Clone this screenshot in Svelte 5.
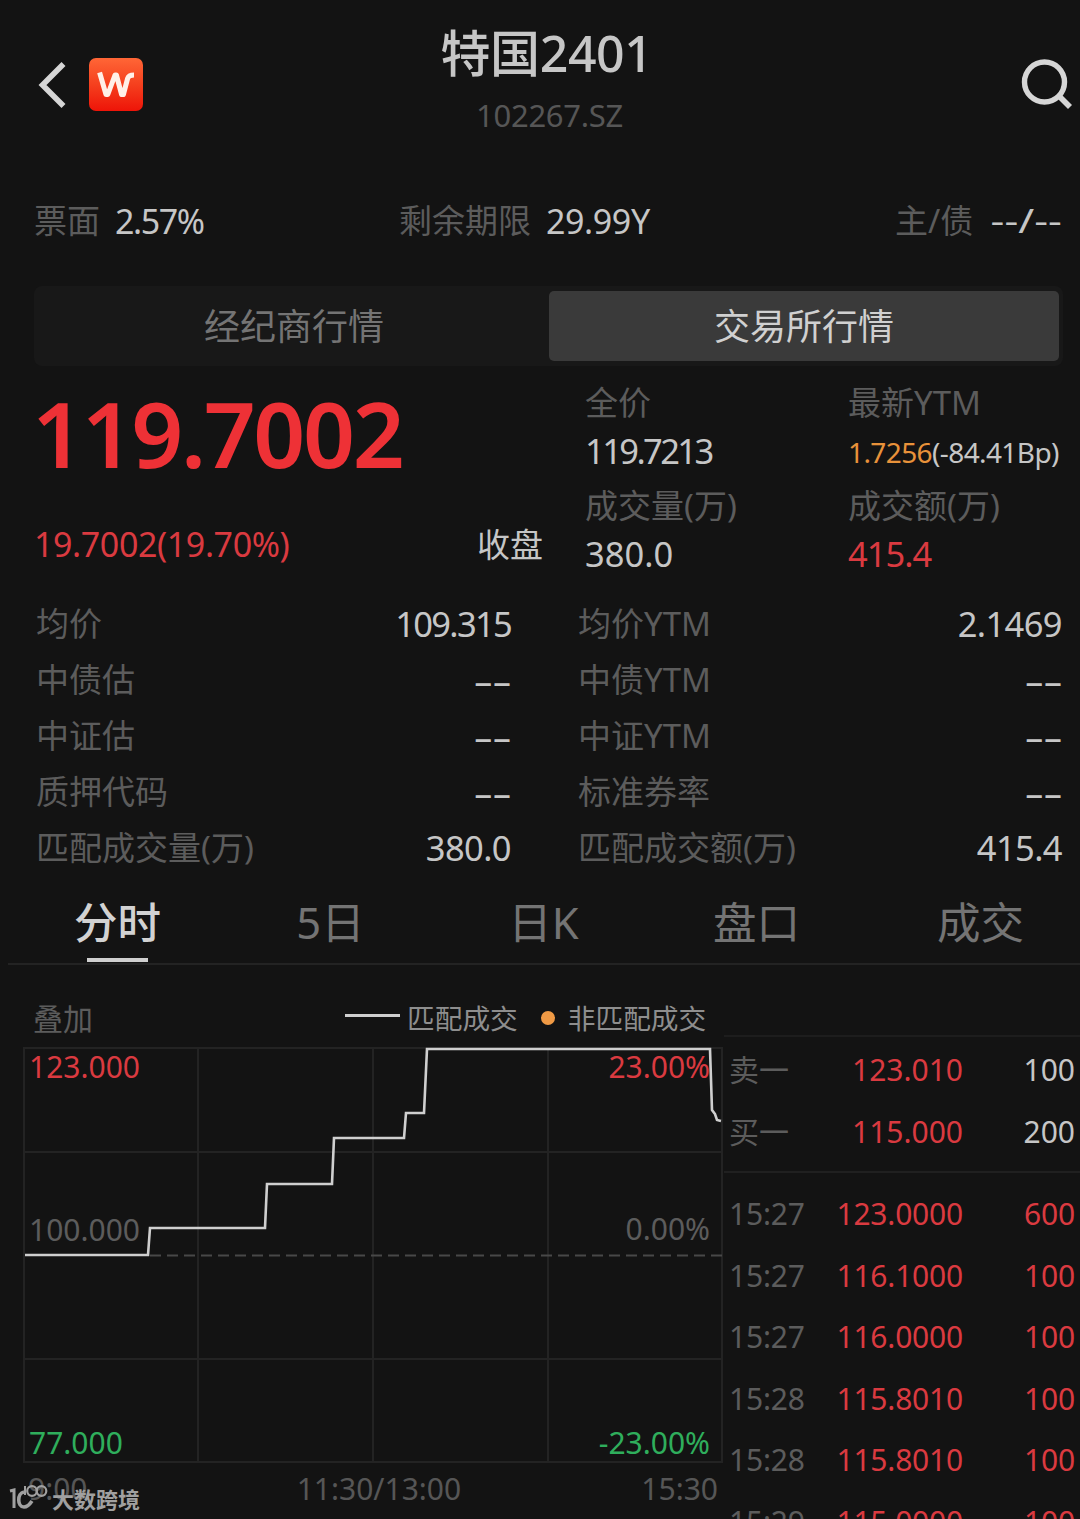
<script lang="ts">
  type Tone = 'up' | 'plain';

  interface Trade {
    time: string;
    price: string;
    volume: string;
  }

  const stats = [
    ['均价', '109.315', '均价YTM', '2.1469'],
    ['中债估', '--', '中债YTM', '--'],
    ['中证估', '--', '中证YTM', '--'],
    ['质押代码', '--', '标准券率', '--'],
    ['匹配成交量(万)', '380.0', '匹配成交额(万)', '415.4']
  ];

  const views = ['分时', '5日', '日K', '盘口', '成交'];
  let activeView = $state('分时');

  const markets = ['经纪商行情', '交易所行情'];
  let activeMarket = $state('交易所行情');

  const quotes: { label: string; price: string; volume: string; tone: Tone }[] = [
    { label: '卖一', price: '123.010', volume: '100', tone: 'plain' },
    { label: '买一', price: '115.000', volume: '200', tone: 'plain' }
  ];

  const trades: Trade[] = [
    { time: '15:27', price: '123.0000', volume: '600' },
    { time: '15:27', price: '116.1000', volume: '100' },
    { time: '15:27', price: '116.0000', volume: '100' },
    { time: '15:28', price: '115.8010', volume: '100' },
    { time: '15:28', price: '115.8010', volume: '100' },
    { time: '15:29', price: '115.0000', volume: '100' }
  ];

  // chart coordinates, origin at the top left of the plot
  const line = [
    [1, 208], [124, 208], [126, 181], [241, 181], [243, 137], [308, 137],
    [310, 91], [380, 91], [382, 66], [400, 66], [403, 2], [686, 2],
    [688, 63], [691, 67], [693, 73], [697, 74]
  ];
  const points = line.map((p) => p.join(',')).join(' ');
</script>

<div class="screen">
  <header>
    <div class="nav">
      <svg class="back" width="28" height="46" viewBox="0 0 28 46">
        <path d="M25.5 2 L4.5 23 L25.5 44" fill="none" stroke="#d6d6d6" stroke-width="5.6" />
      </svg>
      <svg class="logo" width="54" height="54" viewBox="0 0 54 54">
        <defs>
          <linearGradient id="logo-bg" x1="0" y1="0" x2="0" y2="1">
            <stop offset="0" stop-color="#ff6636" />
            <stop offset="0.5" stop-color="#f5401e" />
            <stop offset="1" stop-color="#ee1408" />
          </linearGradient>
        </defs>
        <rect width="54" height="53" rx="7" fill="url(#logo-bg)" />
        <path
          d="M10.6 14.5 L17 36.5 H18.8 L26 17 H27.4 L32.6 36.5 H34.4 L38.6 20.5 Q39.6 17 45 17"
          fill="none"
          stroke="#fff0e8"
          stroke-width="5"
          stroke-linejoin="round"
        />
      </svg>
    </div>
    <div class="title">
      <h1>特国2401</h1>
      <p>102267.SZ</p>
    </div>
    <svg class="search" width="54" height="54" viewBox="0 0 54 54">
      <circle cx="24.5" cy="24" r="20" fill="none" stroke="#d6d6d6" stroke-width="5.4" />
      <path d="M38.5 37.5 L50 49" stroke="#d6d6d6" stroke-width="5.6" />
    </svg>
  </header>

  <section class="info">
    <div><span class="label">票面</span><span class="coupon">2.57%</span></div>
    <div><span class="label">剩余期限</span><span class="term">29.99Y</span></div>
    <div class="rating"><span class="label">主/债</span><span class="grade">--/--</span></div>
  </section>

  <div class="markets">
    {#each markets as market}
      <button class:active={market === activeMarket} onclick={() => (activeMarket = market)}>
        {market}
      </button>
    {/each}
  </div>

  <section class="quote">
    <div class="last">
      <div class="price">119.7002</div>
      <div class="change">
        <span class="up diff">19.7002(19.70%)</span>
        <span class="status">收盘</span>
      </div>
    </div>
    <dl class="full">
      <dt>全价</dt>
      <dd class="tight">119.7213</dd>
      <dt>成交量(万)</dt>
      <dd>380.0</dd>
    </dl>
    <dl>
      <dt>最新YTM</dt>
      <dd class="ytm"><span>1.7256</span>(-84.41Bp)</dd>
      <dt>成交额(万)</dt>
      <dd class="up amount">415.4</dd>
    </dl>
  </section>

  <section class="stats">
    {#each stats as [leftLabel, leftValue, rightLabel, rightValue]}
      <div class="row">
        <span class="label">{leftLabel}</span>
        <span class="value" class:empty={leftValue === '--'} class:long={leftValue.length > 6}>{leftValue}</span>
        <span class="label second">{rightLabel}</span>
        <span class="value" class:empty={rightValue === '--'}>{rightValue}</span>
      </div>
    {/each}
  </section>

  <nav class="views">
    {#each views as view}
      <button class:active={view === activeView} onclick={() => (activeView = view)}>{view}</button>
    {/each}
  </nav>

  <div class="bottom">
    <section class="chart">
      <div class="legend">
        <span class="overlay">叠加</span>
        <i class="dash"></i>
        <span>匹配成交</span>
        <i class="dot"></i>
        <span>非匹配成交</span>
      </div>
      <svg width="700" height="417" viewBox="0 0 700 417">
        <g stroke="#232323" stroke-width="2">
          {#each [0, 174, 349, 524, 698] as x}
            <line x1={x} x2={x} y1="0" y2="416" />
          {/each}
          {#each [1, 105, 312, 415] as y}
            <line x1="0" x2="698" y1={y} y2={y} />
          {/each}
        </g>
        <line x1="126" x2="698" y1="208.5" y2="208.5" stroke="#484848" stroke-width="1.8" stroke-dasharray="11 6" />
        <g class="scale">
          <text x="5" y="31" class="rise">123.000</text>
          <text x="5" y="194">100.000</text>
          <text x="5" y="407" class="fall">77.000</text>
          <text x="686" y="31" text-anchor="end" class="rise">23.00%</text>
          <text x="686" y="193" text-anchor="end">0.00%</text>
          <text x="686" y="407" text-anchor="end" class="fall">-23.00%</text>
        </g>
        <polyline {points} fill="none" stroke="#cfcfcf" stroke-width="2.6" />
      </svg>
      <div class="times">
        <span>9:00</span>
        <span class="noon">11:30/13:00</span>
        <span>15:30</span>
      </div>
    </section>

    <section class="book">
      <div class="levels">
        {#each quotes as q}
          <div class="entry">
            <span class="name">{q.label}</span>
            <span class="up">{q.price}</span>
            <span class={q.tone}>{q.volume}</span>
          </div>
        {/each}
      </div>
      <div class="trades">
        {#each trades as t}
          <div class="entry">
            <span class="name">{t.time}</span>
            <span class="up">{t.price}</span>
            <span class="up">{t.volume}</span>
          </div>
        {/each}
      </div>
    </section>
  </div>

  <div class="watermark">
    <svg width="40" height="28" viewBox="0 0 40 28" fill="none" stroke="#a0a0a0">
      <path d="M2 8 L6 7 V25" stroke-width="3" />
      <path d="M16 9 C9 10 9 24 16 24 C20 24 22 21 24 18" stroke-width="3.6" />
      <path d="M17 3 V12" stroke-width="2" />
      <circle cx="24" cy="8" r="4.8" stroke-width="2.2" />
      <circle cx="33.5" cy="8" r="4.8" stroke-width="2.2" />
    </svg>
    <span>大数跨境</span>
  </div>
</div>

<style>
  :global(body) {
    background: #131313;
  }

  .screen {
    position: relative;
    width: 1080px;
    height: 1519px;
    overflow: hidden;
    background: #131313;
    color: #c6c6c6;
    font-family: 'Noto Sans', 'Noto Sans CJK SC', sans-serif;
    font-size: 33px;
    font-weight: 400;
    white-space: nowrap;
  }

  h1,
  p,
  dl,
  dd {
    margin: 0;
  }

  button {
    padding: 0;
    border: none;
    background: none;
    color: inherit;
    font: inherit;
    cursor: pointer;
  }

  .up {
    color: #da3a40;
  }

  .label {
    color: #5c5c5c;
  }

  header {
    display: grid;
    grid-template-columns: 300px 1fr 300px;
    height: 170px;
  }

  .nav {
    display: flex;
    align-items: center;
    gap: 22px;
    height: 168px;
    padding-left: 38px;
    padding-top: 1px;
    box-sizing: border-box;
  }

  .logo {
    margin-left: 1px;
  }

  .title {
    padding-top: 18px;
    padding-left: 13px;
    text-align: center;
  }

  h1 {
    font-size: 50px;
    font-weight: 500;
    line-height: 70px;
    letter-spacing: -0.4px;
  }

  .title p {
    margin: 7px 0 0 6px;
    color: #565656;
    font-size: 31px;
    line-height: 40px;
    letter-spacing: -0.3px;
  }

  .search {
    justify-self: end;
    margin: 58px 6px 0 0;
  }

  .info {
    display: grid;
    grid-template-columns: 365px 400px 1fr;
    height: 98px;
    padding: 2px 18px 0 34px;
    box-sizing: border-box;
    line-height: 98px;
  }

  .info div {
    display: flex;
    gap: 15px;
  }

  .coupon {
    font-size: 34px;
    letter-spacing: -1.4px;
  }

  .term {
    font-size: 34px;
    letter-spacing: -0.4px;
  }

  .info .rating {
    justify-content: flex-end;
    gap: 34px;
  }

  .grade {
    transform: scaleX(1.3);
    transform-origin: right;
  }

  .markets {
    display: flex;
    box-sizing: border-box;
    width: 1029px;
    height: 80px;
    margin: 18px 0 0 34px;
    padding: 5px 4px 5px 5px;
    border-radius: 8px;
    background: #181818;
    color: #747474;
    font-size: 36px;
  }

  .markets button {
    width: 510px;
    padding-top: 2px;
    line-height: 68px;
    border-radius: 5px;
  }

  .markets .active {
    background: #3a3a3a;
    color: #d0d0d0;
  }

  .quote {
    display: flex;
    height: 229px;
  }

  .last {
    width: 511px;
    margin-left: 32px;
  }

  .price {
    height: 140px;
    color: #ee3136;
    font-size: 91px;
    font-weight: 600;
    line-height: 134px;
    letter-spacing: -2.4px;
  }

  .change {
    display: flex;
    justify-content: space-between;
    padding-left: 2px;
    line-height: 77px;
  }

  .diff {
    font-size: 34px;
    letter-spacing: -0.4px;
  }

  .full {
    width: 263px;
    margin-left: 42px;
  }

  dl {
    padding-top: 12px;
  }

  dt {
    height: 52px;
    color: #5c5c5c;
    line-height: 50px;
  }

  dd {
    height: 51px;
    font-size: 34.5px;
    line-height: 42px;
  }

  .tight {
    letter-spacing: -2.6px;
  }

  .amount {
    letter-spacing: -1px;
  }

  .ytm {
    font-size: 28px;
    letter-spacing: -0.6px;
    line-height: 44px;
  }

  .ytm span {
    color: #e8923a;
  }

  .row {
    display: grid;
    grid-template-columns: 235px 240px 309px 242px;
    height: 56px;
    padding-left: 36px;
    line-height: 58px;
  }

  .row .second {
    padding-left: 67px;
  }

  .value {
    text-align: right;
    font-size: 34.5px;
    letter-spacing: -0.6px;
  }

  .value.long {
    letter-spacing: -1.7px;
  }

  .value.empty {
    padding-top: 1px;
    transform: scaleX(1.8);
    transform-origin: right;
  }

  .views {
    display: flex;
    height: 88px;
    padding-left: 3px;
    margin-left: 8px;
    border-bottom: 2px solid #232323;
    color: #747474;
    font-size: 43.5px;
  }

  .views button {
    position: relative;
    flex: none;
    width: 213px;
    padding-top: 7px;
    line-height: 81px;
  }

  .views button:last-child {
    margin-left: 11px;
  }

  .views .active {
    color: #d2d2d2;
    font-weight: 500;
  }

  .views .active::after {
    content: '';
    position: absolute;
    left: 76px;
    bottom: 1px;
    width: 61px;
    height: 4px;
    background: #cfcfcf;
  }

  .bottom {
    display: flex;
  }

  .chart {
    width: 700px;
    margin-left: 24px;
  }

  .chart svg {
    display: block;
    overflow: visible;
  }

  .legend {
    display: flex;
    align-items: center;
    height: 82px;
    padding-left: 10px;
    box-sizing: border-box;
    padding-top: 21px;
    color: #8e8e8e;
    font-size: 27.7px;
  }

  .legend .overlay {
    width: 311px;
    margin-left: -1px;
    margin-right: 1px;
    color: #5c5c5c;
    font-size: 30px;
  }

  .dash {
    width: 55px;
    height: 3px;
    margin: -2px 7px 0 0;
    background: #cfcfcf;
  }

  .dot {
    width: 14px;
    height: 14px;
    margin: 2px 13px 0 23px;
    border-radius: 50%;
    background: #f09a45;
  }

  .scale {
    fill: #5c5c5c;
    font-size: 30px;
  }

  .rise {
    fill: #da3a40;
  }

  .fall {
    fill: #2fae5c;
  }

  .times {
    display: flex;
    justify-content: space-between;
    padding: 0 6px 0 4px;
    color: #565656;
    font-size: 30px;
    line-height: 50px;
  }

  .noon {
    margin-left: 29px;
  }

  .book {
    flex: 1;
    margin-top: 70px;
    border-top: 2px solid #1d1d1d;
    font-size: 30px;
  }

  .levels {
    height: 134px;
    border-bottom: 2px solid #202020;
  }

  .levels .entry {
    height: 62px;
    line-height: 65px;
  }

  .trades {
    padding-top: 9px;
    letter-spacing: -0.2px;
  }

  .entry {
    display: grid;
    grid-template-columns: 100px 134px 112px;
    height: 61.6px;
    padding-left: 5px;
    line-height: 64px;
    text-align: right;
  }

  .entry .name {
    color: #5c5c5c;
    text-align: left;
  }

  .watermark {
    position: absolute;
    left: 8px;
    top: 1483px;
    display: flex;
    gap: 4px;
    color: #a0a0a0;
    font-size: 22px;
    font-weight: 700;
    line-height: 33px;
  }
</style>
